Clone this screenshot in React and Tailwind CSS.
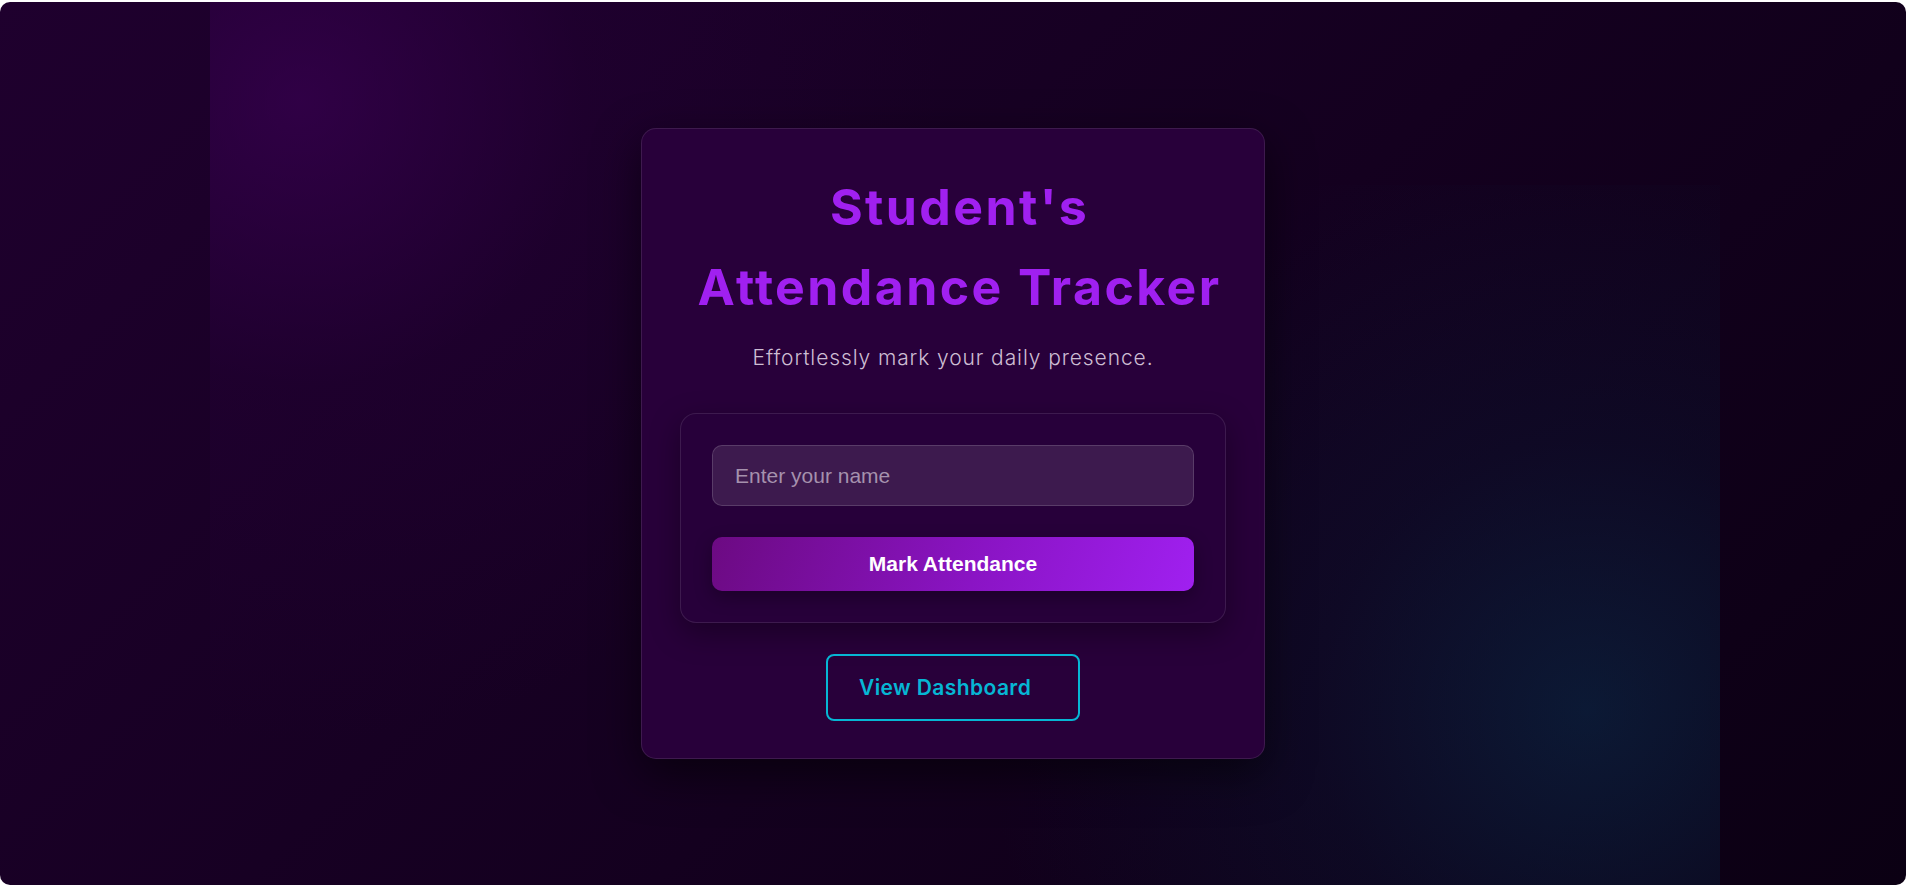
import React from 'react'

export default function App() {
  return (
    <div className="min-h-screen w-full bg-white pt-[2px]">
      <div className="relative flex h-[883px] w-[1906px] items-center justify-center overflow-hidden rounded-[10px] bg-[linear-gradient(135deg,#1f002e_0%,#14001f_55%,#0b0013_100%)]">
        {/* glow blobs */}
        <div className="pointer-events-none absolute left-[210px] top-0 h-[820px] w-[1000px] bg-[radial-gradient(circle_640px_at_9%_12%,rgba(64,0,92,0.55)_0%,rgba(40,0,60,0.28)_45%,transparent_100%)]" />
        <div className="pointer-events-none absolute bottom-0 right-[186px] h-[700px] w-[950px] bg-[radial-gradient(circle_600px_at_86%_75%,rgba(10,42,72,0.6)_0%,rgba(10,30,60,0.3)_45%,transparent_100%)]" />

        <div className="relative z-10 flex w-[624px] flex-col items-center rounded-[15px] border border-white/10 bg-[#28003a] px-[38px] pb-[37px] pt-[38px] shadow-[0_15px_45px_rgba(0,0,0,0.55)]">
          <h1 className="pl-[13px] text-center font-['Inter',sans-serif] text-[50px] font-bold leading-[80px] tracking-[2.4px] text-[#a020f0]">
            Student's
            <br />
            Attendance Tracker
          </h1>
          <p className="mt-[15px] font-['Inter',sans-serif] text-[21px] font-light leading-[32px] tracking-[0.9px] text-[#cdbdd3]">
            Effortlessly mark your daily presence.
          </p>

          <div className="mt-[39px] flex w-full flex-col gap-[31px] rounded-[16px] border border-white/10 bg-[#27003a] p-[31px] shadow-[0_10px_30px_rgba(0,0,0,0.35)]">
            <input
              type="text"
              placeholder="Enter your name"
              className="h-[61px] w-full rounded-[10px] border border-white/15 bg-white/10 px-[22px] font-['Liberation_Sans',Arial,sans-serif] text-[21px] text-white outline-none placeholder:text-[#a591ad]"
            />
            <button className="h-[54px] w-full rounded-[10px] bg-[linear-gradient(110deg,#6c0a82_0%,#8a14c4_55%,#a020f0_100%)] font-['Liberation_Sans',Arial,sans-serif] text-[21px] font-bold text-white shadow-[0_6px_18px_rgba(0,0,0,0.3)]">
              Mark Attendance
            </button>
          </div>

          <button className="mt-[31px] h-[67px] w-[254px] rounded-[8px] border-2 border-[#06b6d4] pl-[31px] pr-[40px] text-left font-['Inter',sans-serif] text-[21px] font-semibold tracking-[0.4px] text-[#06b6d4]">
            View Dashboard
          </button>
        </div>
      </div>
    </div>
  )
}
